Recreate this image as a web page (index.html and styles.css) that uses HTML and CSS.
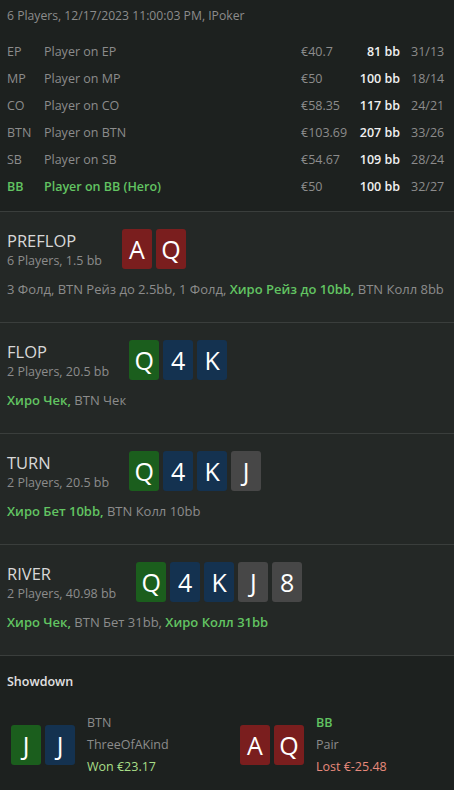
FILE: index.html
```html
<!DOCTYPE html>
<html lang="en">
<head>
  <meta charset="UTF-8" />
  <meta name="viewport" content="width=device-width, initial-scale=1.0"/>
  <title>Hand History</title>
  <link rel="stylesheet" href="styles.css">
</head>
<body>

  <!-- Table info -->
  <div class="table-info">
    <div class="info-line">6 Players, 12/17/2023 11:00:03 PM, IPoker</div>
    <div class="players">
      <div class="player-row">
        <span class="pos">EP</span><span class="name">Player on EP</span>
        <span class="stack">€40.7</span><span class="bb">81 bb</span><span class="stats">31/13</span>
      </div>
      <div class="player-row">
        <span class="pos">MP</span><span class="name">Player on MP</span>
        <span class="stack">€50</span><span class="bb">100 bb</span><span class="stats">18/14</span>
      </div>
      <div class="player-row">
        <span class="pos">CO</span><span class="name">Player on CO</span>
        <span class="stack">€58.35</span><span class="bb">117 bb</span><span class="stats">24/21</span>
      </div>
      <div class="player-row">
        <span class="pos">BTN</span><span class="name">Player on BTN</span>
        <span class="stack">€103.69</span><span class="bb">207 bb</span><span class="stats">33/26</span>
      </div>
      <div class="player-row">
        <span class="pos">SB</span><span class="name">Player on SB</span>
        <span class="stack">€54.67</span><span class="bb">109 bb</span><span class="stats">28/24</span>
      </div>
      <div class="player-row hero">
        <span class="pos">BB</span><span class="name">Player on BB (Hero)</span>
        <span class="stack">€50</span><span class="bb">100 bb</span><span class="stats">32/27</span>
      </div>
    </div>
  </div>

  <!-- Streets -->
  <div class="street">
    <div class="street-head">
      <div class="street-title">
        <div class="street-name">PREFLOP</div>
        <div class="street-sub">6 Players, 1.5 bb</div>
      </div>
      <div class="cards">
        <span class="card red">A</span><span class="card red">Q</span>
      </div>
    </div>
    <div class="actions">3 Фолд, BTN Рейз до 2.5bb, 1 Фолд, <span class="hero-act">Хиро Рейз до 10bb,</span> BTN Колл 8bb</div>
  </div>

  <div class="street">
    <div class="street-head">
      <div class="street-title">
        <div class="street-name">FLOP</div>
        <div class="street-sub">2 Players, 20.5 bb</div>
      </div>
      <div class="cards">
        <span class="card green">Q</span><span class="card blue">4</span><span class="card blue">K</span>
      </div>
    </div>
    <div class="actions"><span class="hero-act">Хиро Чек,</span> BTN Чек</div>
  </div>

  <div class="street">
    <div class="street-head">
      <div class="street-title">
        <div class="street-name">TURN</div>
        <div class="street-sub">2 Players, 20.5 bb</div>
      </div>
      <div class="cards">
        <span class="card green">Q</span><span class="card blue">4</span><span class="card blue">K</span><span class="card gray">J</span>
      </div>
    </div>
    <div class="actions"><span class="hero-act">Хиро Бет 10bb,</span> BTN Колл 10bb</div>
  </div>

  <div class="street">
    <div class="street-head">
      <div class="street-title">
        <div class="street-name">RIVER</div>
        <div class="street-sub">2 Players, 40.98 bb</div>
      </div>
      <div class="cards">
        <span class="card green">Q</span><span class="card blue">4</span><span class="card blue">K</span><span class="card gray">J</span><span class="card gray">8</span>
      </div>
    </div>
    <div class="actions"><span class="hero-act">Хиро Чек,</span> BTN Бет 31bb, <span class="hero-act">Хиро Колл 31bb</span></div>
  </div>

  <!-- Showdown -->
  <div class="showdown">
    <div class="showdown-title">Showdown</div>
    <div class="showdown-list">
      <div class="sd-item">
        <div class="cards">
          <span class="card green">J</span><span class="card blue">J</span>
        </div>
        <div class="sd-info">
          <div>BTN</div>
          <div>ThreeOfAKind</div>
          <div class="won">Won €23.17</div>
        </div>
      </div>
      <div class="sd-item">
        <div class="cards">
          <span class="card red">A</span><span class="card red">Q</span>
        </div>
        <div class="sd-info">
          <div class="sd-hero">BB</div>
          <div>Pair</div>
          <div class="lost">Lost €-25.48</div>
        </div>
      </div>
    </div>
  </div>

</body>
</html>
```

FILE: styles.css
```css
body {
  margin: 0;
  background: #1d211f;
  color: #8c8c8c;
  font-family: "Open Sans", "Noto Sans", sans-serif;
  font-size: 12.5px;
}

.table-info {
  padding: 7px 7px 11px;
  border-bottom: 1px solid #3a3e3c;
}
.info-line {
  font-size: 12.2px;
  line-height: 18px;
  margin-bottom: 13px;
}
.player-row {
  display: grid;
  grid-template-columns: 37px 1fr 57px 42px 47px;
  height: 27px;
  align-items: center;
}
.player-row .bb {
  text-align: right;
  color: #f0f0f0;
  font-weight: 600;
}
.player-row .stats {
  padding-left: 11px;
}
.player-row.hero .pos,
.player-row.hero .name {
  color: #62c462;
  font-weight: 600;
}

.street {
  background: #242826;
  border-bottom: 1px solid #3a3e3c;
  padding: 16px 7px 0;
  height: 94px;
}
.street-head {
  display: flex;
  align-items: center;
  gap: 20px;
}
.street-name {
  color: #d8d8d8;
  font-size: 16.5px;
  line-height: 22px;
  margin-top: 2px;
}
.street-sub {
  line-height: 18px;
}
.actions {
  margin-top: 10px;
  font-size: 13px;
  line-height: 18px;
}
.hero-act {
  color: #62c462;
  font-weight: 600;
}

.cards {
  display: flex;
  gap: 4px;
}
.card {
  width: 30px;
  height: 40px;
  border-radius: 3px;
  color: #fff;
  font-size: 25px;
  line-height: 40px;
  text-align: center;
}
.red { background: #7a1e1e; }
.green { background: #1b5e1d; }
.blue { background: #143250; }
.gray { background: #474747; }

.showdown {
  padding: 17px 7px 0 11px;
}
.showdown-title {
  color: #e2e2e2;
  font-weight: 600;
  margin-left: -4px;
  line-height: 18px;
}
.showdown-list {
  display: flex;
  margin-top: 21px;
}
.sd-item {
  display: flex;
  align-items: center;
  gap: 12px;
  width: 229px;
  flex-shrink: 0;
}
.sd-info div {
  line-height: 22px;
}
.sd-hero {
  color: #62c462;
  font-weight: 600;
}
.won {
  color: #a8df88;
}
.lost {
  color: #e88a7c;
}
```
